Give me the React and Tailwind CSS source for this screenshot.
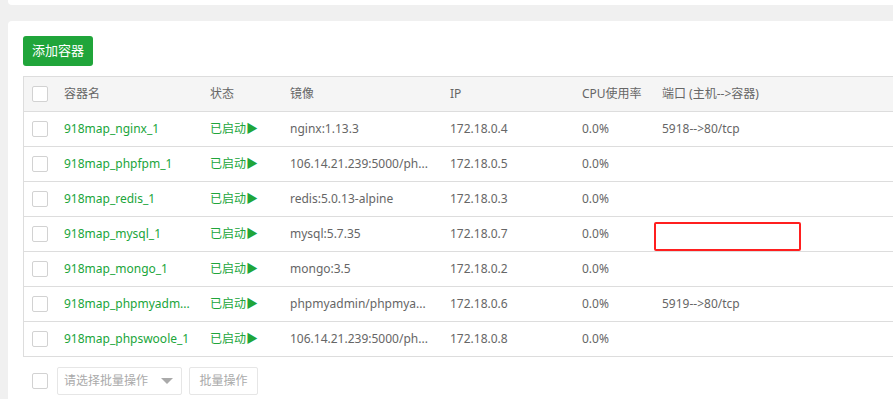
import React from "react";

const rows = [
  { name: "918map_nginx_1", image: "nginx:1.13.3", ip: "172.18.0.4", cpu: "0.0%", port: "5918-->80/tcp" },
  { name: "918map_phpfpm_1", image: "106.14.21.239:5000/ph...", ip: "172.18.0.5", cpu: "0.0%", port: "" },
  { name: "918map_redis_1", image: "redis:5.0.13-alpine", ip: "172.18.0.3", cpu: "0.0%", port: "" },
  { name: "918map_mysql_1", image: "mysql:5.7.35", ip: "172.18.0.7", cpu: "0.0%", port: "", mark: true },
  { name: "918map_mongo_1", image: "mongo:3.5", ip: "172.18.0.2", cpu: "0.0%", port: "" },
  { name: "918map_phpmyadm...", image: "phpmyadmin/phpmya...", ip: "172.18.0.6", cpu: "0.0%", port: "5919-->80/tcp" },
  { name: "918map_phpswoole_1", image: "106.14.21.239:5000/ph...", ip: "172.18.0.8", cpu: "0.0%", port: "" },
];

function Box() {
  return <div className="w-4 h-4 rounded-[2px] border border-[#d2d2d2] bg-white" />;
}

function App() {
  return (
    <div
      className="w-[893px] h-[399px] overflow-hidden bg-[#f0f0f0] text-[12px] text-[#666]"
      style={{ fontFamily: '"Noto Sans", "Noto Sans CJK SC", sans-serif' }}
    >
      <div className="ml-[8px] w-[900px] h-[5px] bg-white rounded-b-[4px]" />
      <div className="mt-[16px] ml-[8px] w-[900px] h-[400px] bg-white rounded-[4px] pt-[15px] pl-[15px]">
        <button className="h-[30px] w-[70px] rounded-[3px] bg-[#20a53a] text-white text-[13px]">添加容器</button>
        <div className="mt-[10px] border-l border-[#ddd]">
          <div className="flex h-[36px] border-t border-b border-[#ddd] bg-[#f5f5f5] items-center">
            <div className="w-[32px] pl-[8px]"><Box /></div>
            <div className="w-[146px] pl-[8px]">容器名</div>
            <div className="w-[80px] pl-[8px]">状态</div>
            <div className="w-[160px] pl-[8px]">镜像</div>
            <div className="w-[132px] pl-[8px]">IP</div>
            <div className="w-[80px] pl-[8px]">CPU使用率</div>
            <div className="pl-[8px]">端口 (主机--&gt;容器)</div>
          </div>
          {rows.map((r) => (
            <div key={r.name} className="flex h-[35px] border-b border-[#ddd] items-center">
              <div className="w-[32px] pl-[8px]"><Box /></div>
              <div className="w-[146px] pl-[8px] text-[#20a53a] whitespace-nowrap">{r.name}</div>
              <div className="w-[80px] pl-[8px] text-[#20a53a] whitespace-nowrap">已启动▶</div>
              <div className="w-[160px] pl-[8px] whitespace-nowrap">{r.image}</div>
              <div className="w-[132px] pl-[8px]">{r.ip}</div>
              <div className="w-[80px] pl-[8px]">{r.cpu}</div>
              <div className="pl-[8px]">
                {r.mark ? (
                  <div className="w-[147px] h-[29px] -ml-[8px] mt-[5px] rounded-[2px] border-2 border-[#ff1f1f]" />
                ) : (
                  r.port
                )}
              </div>
            </div>
          ))}
        </div>
        <div className="flex items-center mt-[10px] pl-[9px] gap-[9px]">
          <Box />
          <div className="flex items-center justify-between w-[125px] h-[28px] rounded-[2px] border border-[#e6e6e6] pl-[6px] pr-[8px] text-[#aaa]">
            <span>请选择批量操作</span>
            <span className="w-0 h-0 border-l-[6px] border-r-[6px] border-t-[6px] border-l-transparent border-r-transparent border-t-[#aaa]" />
          </div>
          <div className="h-[28px] w-[69px] -ml-[2px] rounded-[2px] border border-[#e6e6e6] flex items-center justify-center text-[#aaa]">批量操作</div>
        </div>
      </div>
    </div>
  );
}

export default App;
